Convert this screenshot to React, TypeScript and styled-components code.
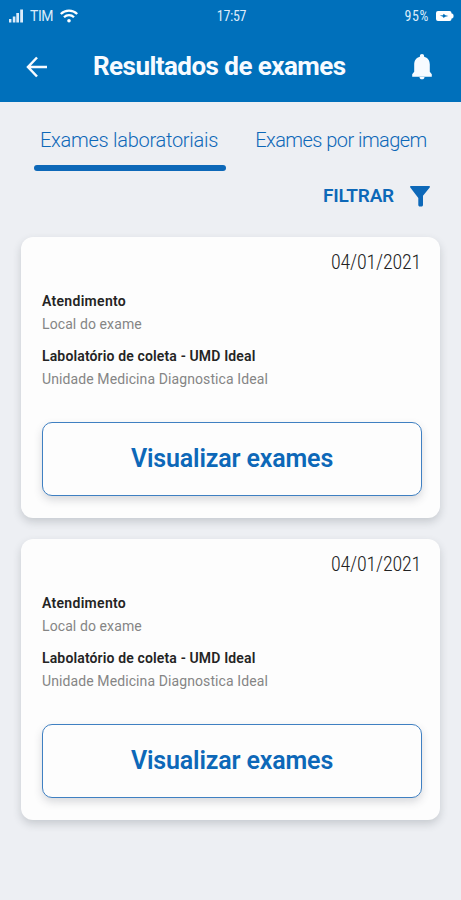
import React from "react";
import styled, { createGlobalStyle } from "styled-components";

const BLUE = "#0070bb";
const INK_BLUE = "#0d68b8";

const GlobalStyle = createGlobalStyle`
  *, *::before, *::after { box-sizing: border-box; }
  body { margin: 0; background: #edeff3; }
  button { font: inherit; color: inherit; background: none; border: 0; padding: 0; letter-spacing: inherit; }
`;

const Screen = styled.div`
  width: 461px;
  height: 900px;
  overflow: hidden;
  background: #edeff3;
  font-family: Roboto, "Liberation Sans", sans-serif;
`;

const Header = styled.header`
  height: 102px;
  background: ${BLUE};
  color: #f7fbff;
`;

const StatusBar = styled.div`
  display: grid;
  grid-template-columns: 1fr auto 1fr;
  align-items: center;
  height: 32px;
  padding: 0 7px 0 9px;
  font-size: 14px;
  color: #dcecfa;
`;

const StatusGroup = styled.div<{ $end?: boolean }>`
  display: flex;
  align-items: center;
  justify-content: ${(p) => (p.$end ? "flex-end" : "flex-start")};
  gap: 7px;
`;

const Label = styled.span<{ $tracking: number; $condensed?: boolean }>`
  white-space: nowrap;
  font-stretch: ${(p) => (p.$condensed ? "75%" : "100%")};
  letter-spacing: ${(p) => p.$tracking}px;
`;

const TitleBar = styled.div`
  display: flex;
  align-items: center;
  height: 70px;
  padding: 0 29px 0 26px;
`;

const IconButton = styled.button`
  display: flex;
`;

const Title = styled.h1`
  flex: 1;
  margin: -2px 0 0 45px;
  font-size: 26px;
  line-height: 32px;
  font-weight: 700;
  letter-spacing: -0.55px;
  white-space: nowrap;
`;

const Tabs = styled.nav`
  display: flex;
  gap: 23px;
  height: 69px;
  padding: 0 28px 0 34px;
`;

const Tab = styled.button<{ $active?: boolean; $tracking: number }>`
  display: flex;
  justify-content: center;
  width: ${(p) => (p.$active ? 190 : 184)}px;
  margin-right: ${(p) => (p.$active ? 2 : 0)}px;
  padding-top: 26px;
  position: relative;
  && {
    font-size: 20px;
    line-height: 24px;
    font-weight: 300;
    color: ${INK_BLUE};
    letter-spacing: ${(p) => p.$tracking}px;
  }
  white-space: nowrap;
  &::after {
    content: "";
    display: ${(p) => (p.$active ? "block" : "none")};
    position: absolute;
    left: 0;
    right: -2px;
    bottom: 0;
    height: 6px;
    border-radius: 3px;
    background: ${INK_BLUE};
  }
`;

const FilterRow = styled.div`
  display: flex;
  justify-content: flex-end;
  height: 66px;
  padding: 13px 31px 0 0;
`;

const FilterButton = styled.button`
  display: flex;
  align-items: center;
  gap: 16px;
  height: 24px;
  && {
    color: ${INK_BLUE};
    font-size: 19px;
    line-height: 22px;
    font-weight: 600;
  }
`;

const CardList = styled.main`
  display: flex;
  flex-direction: column;
  gap: 21px;
  padding: 0 21px;
`;

const Card = styled.article`
  display: flex;
  flex-direction: column;
  height: 281px;
  padding: 13px 18px 22px 21px;
  border-radius: 12px;
  background: #fdfdfd;
  box-shadow: 0 4px 9px rgba(50, 58, 72, 0.2);
`;

const ExamDate = styled.time`
  align-self: flex-end;
  margin-right: 1px;
  font-size: 20px;
  line-height: 24px;
  font-weight: 300;
  font-stretch: 75%;
  letter-spacing: -0.2px;
  color: #222;
`;

const Details = styled.dl`
  margin: 17px 0 0;
  white-space: nowrap;
`;

const Term = styled.dt<{ $tracking: number }>`
  font-size: 14px;
  line-height: 20px;
  font-weight: 600;
  letter-spacing: ${(p) => p.$tracking}px;
  color: #242424;
`;

const Value = styled.dd<{ $tracking: number }>`
  margin: 3px 0 12px;
  font-size: 14px;
  line-height: 20px;
  letter-spacing: ${(p) => p.$tracking}px;
  color: #858585;
`;

const ViewButton = styled.button`
  flex: none;
  height: 74px;
  margin-top: auto;
  border: 1px solid #3f80c2;
  border-radius: 10px;
  background: #fdfdfd;
  box-shadow: 0 4px 8px rgba(50, 58, 72, 0.18);
  && {
    font-size: 25px;
    line-height: 30px;
    font-weight: 600;
    letter-spacing: -0.15px;
    color: ${INK_BLUE};
  }
`;

const SignalIcon = () => (
  <svg width="14" height="14" viewBox="0 0 14 14" fill="currentColor">
    <rect x="0" y="10" width="2.4" height="3.5" />
    <rect x="3.8" y="7.5" width="2.6" height="6" />
    <rect x="7.3" y="4" width="2.7" height="9.5" />
    <rect x="11.2" y="0.5" width="2.8" height="13" />
  </svg>
);

const WifiIcon = () => (
  <svg width="18" height="14" viewBox="0 0 18 14" fill="none" stroke="#fff" strokeWidth="2.3">
    <path d="M.8 5C5.4.5 12.6.5 17.2 5" />
    <path d="M4 8.3c2.8-2.800 7.200-2.800 10 0" />
    <circle cx="9" cy="11.700" r="1.800" fill="#fff" stroke="none" />
  </svg>
);

const BatteryIcon = () => (
  <svg width="18" height="10" viewBox="0 0 18 10">
    <path d="M2 0h11.500a2 2 0 0 1 2 2v.5h.7l1.300 1.300v2.400l-1.300 1.300h-.7V8a2 2 0 0 1-2 2H2a2 2 0 0 1-2-2V2a2 2 0 0 1 2-2Z" fill="#fff" />
    <path d="M3.800 4.400 7 4.200 7.600 2.800l1.800 1.400 3 .9-3.200.7-1.700 1.300L7 5.800Z" fill={BLUE} />
  </svg>
);

const BackIcon = () => (
  <svg width="22" height="22" viewBox="0 0 22 22" fill="none" stroke="currentColor" strokeWidth="2.5">
    <path d="M21 11H2.500M11 1.500 2 11l9 9.500" />
  </svg>
);

const BellIcon = () => (
  <svg width="20" height="26" viewBox="0 0 20 26" fill="currentColor">
    <path d="M10 0c1.300 0 2.100.8 2.100 2v.7C15.800 3.600 17.800 6.600 17.800 10.500v7.300l2 2.500v2.400H.2v-2.400l2-2.500v-7.300c0-3.900 2-6.900 5.700-7.800V2c0-1.200.8-2 2.100-2Z" />
    <path d="M7.500 23h5c0 1.600-1 2.300-2.500 2.300S7.500 24.600 7.500 23Z" />
  </svg>
);

const FunnelIcon = () => (
  <svg width="20" height="21" viewBox="0 0 20 21" fill="currentColor">
    <path d="M.8 0h18.400c.7 0 1 .9.500 1.500L13 9.800v9.200c0 .9-.7 1.500-1.500 1.500h-1.700c-.8 0-1.500-.6-1.500-1.500v-7L.3 1.500C-.2.900.1 0 .8 0Z" />
  </svg>
);

const exams = [
  { id: 1, date: "04/01/2021" },
  { id: 2, date: "04/01/2021" },
];

const ExamCard = ({ date }: { date: string }) => (
  <Card>
    <ExamDate>{date}</ExamDate>
    <Details>
      <Term $tracking={0.3}>Atendimento</Term>
      <Value $tracking={0.1}>Local do exame</Value>
      <Term $tracking={0.14}>Labolatório de coleta - UMD Ideal</Term>
      <Value $tracking={0.1}>Unidade Medicina Diagnostica Ideal</Value>
    </Details>
    <ViewButton>Visualizar exames</ViewButton>
  </Card>
);

export default function App() {
  return (
    <Screen>
      <GlobalStyle />
      <Header>
        <StatusBar>
          <StatusGroup>
            <SignalIcon />
            <Label $tracking={-0.4}>TIM</Label>
            <WifiIcon />
          </StatusGroup>
          <Label $condensed $tracking={-0.3}>17:57</Label>
          <StatusGroup $end>
            <Label $condensed $tracking={0.6}>95%</Label>
            <BatteryIcon />
          </StatusGroup>
        </StatusBar>
        <TitleBar>
          <IconButton aria-label="Voltar"><BackIcon /></IconButton>
          <Title>Resultados de exames</Title>
          <IconButton aria-label="Notificações"><BellIcon /></IconButton>
        </TitleBar>
      </Header>
      <Tabs>
        <Tab $active $tracking={-0.27}>Exames laboratoriais</Tab>
        <Tab $tracking={-0.55}>Exames por imagem</Tab>
      </Tabs>
      <FilterRow>
        <FilterButton>
          <Label $tracking={-0.2}>FILTRAR</Label>
          <FunnelIcon />
        </FilterButton>
      </FilterRow>
      <CardList>
        {exams.map((exam) => (
          <ExamCard key={exam.id} date={exam.date} />
        ))}
      </CardList>
    </Screen>
  );
}
